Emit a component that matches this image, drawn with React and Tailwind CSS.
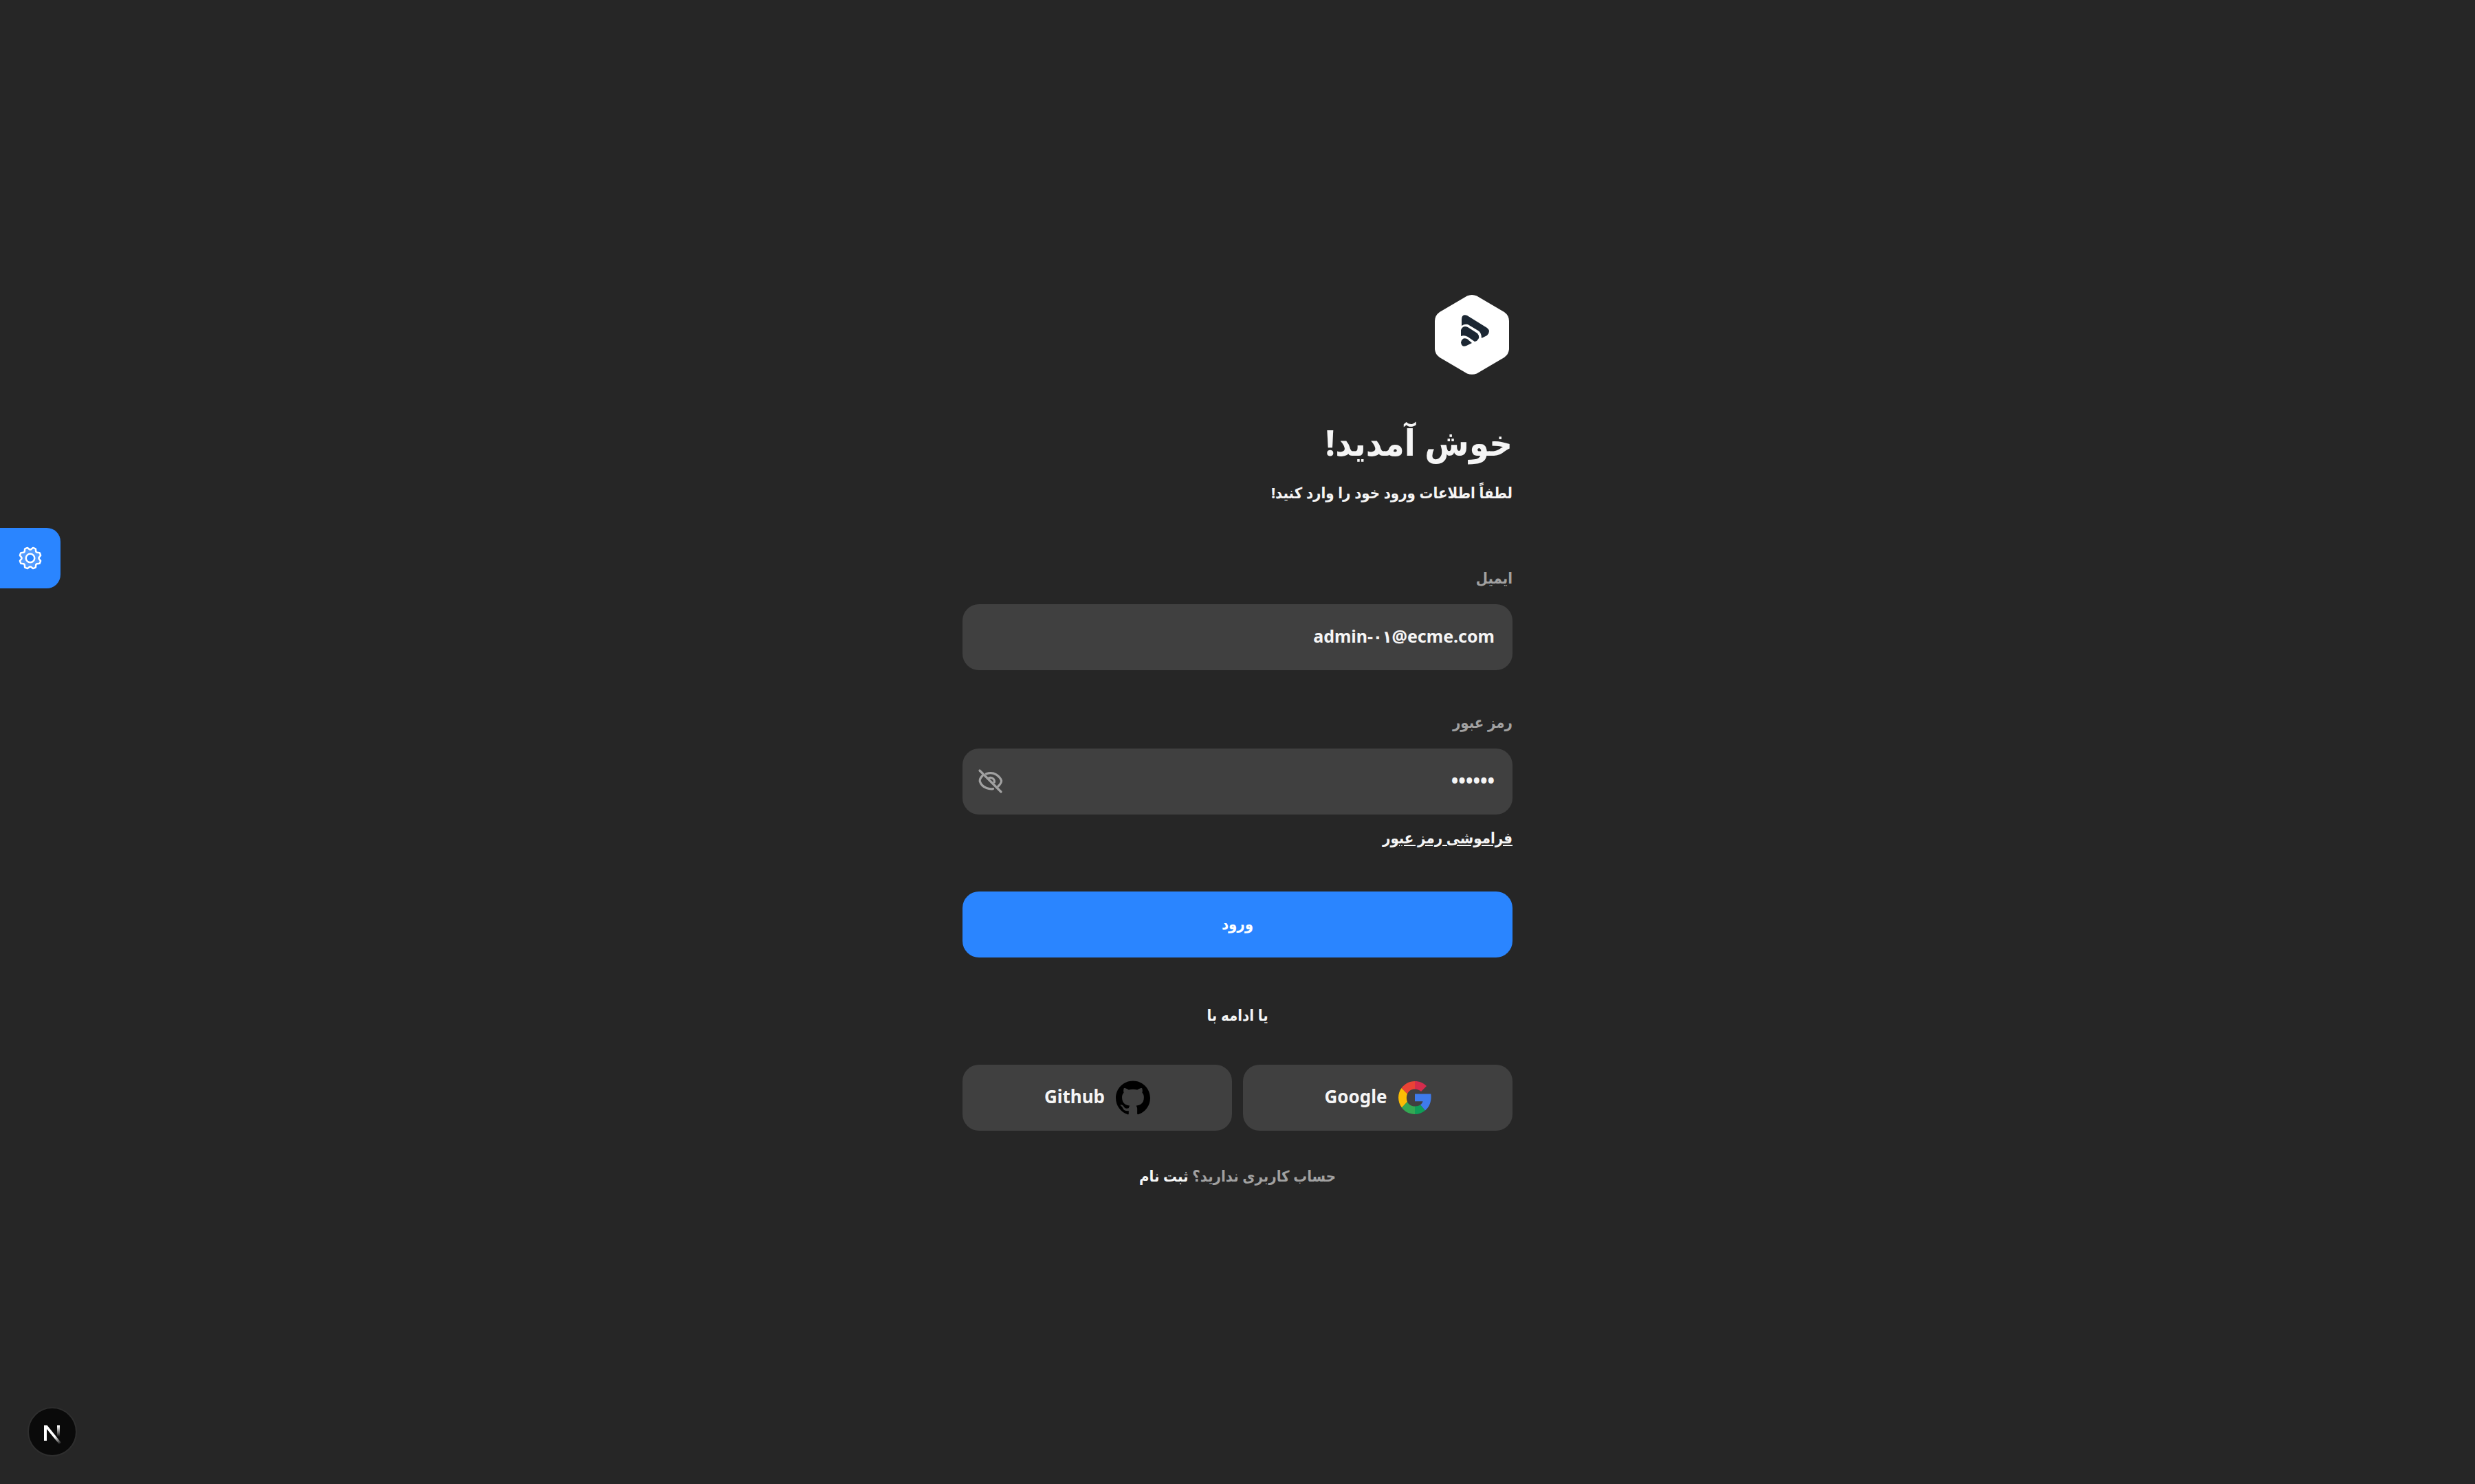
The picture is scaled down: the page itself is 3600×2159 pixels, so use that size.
import { PiGearDuotone } from "react-icons/pi";
import { SiGithub } from "react-icons/si";

function Logo() {
  return (
    <svg viewBox="0 0 110 116" className="mr-1 h-[116px] w-[110px]" role="img" aria-label="Ecme">
      <path d="M48 1.500Q55-1.500 62 1.500L102 25Q109 30 109 38V78Q109 86 102 91L62 114.500Q55 117 48 114.500L8 91Q1 86 1 78V38Q1 30 8 25Z" fill="#fff" />
      <g fill="#1c2733">
        <path d="M40 45V36Q40 27 48 30L77 48Q83 53 77 59L69 63Q69 55 64 52L49 43Q44 42 40 45Z" />
        <path d="M39 60V51Q42 44 49 47L63 56Q68 62 62 67L59 68L49 61Q44 58 39 60Z" />
        <path d="M39 69Q41 61 48 64L55 70L47 74Q40 77 39 69Z" />
      </g>
    </svg>
  );
}

function EyeOff() {
  return (
    <svg viewBox="0 0 46 46" className="size-[46px]" fill="none" stroke="currentColor" strokeWidth="3.200" strokeLinecap="round">
      <path d="M7 7L38 38" />
      <path d="M11.500 14C8 17.500 7 20 7.200 22.500C8.500 27 13 31 17 32.600C20.500 34 23 34.200 26.500 33.600" />
      <path d="M16.500 11.800C21 10.200 26.500 10.200 31 12.800C35 15.500 38 19 38.600 22C38.500 24.800 36.500 27.500 33.800 30" />
      <path d="M20.500 17.800C25 16.500 29 19.500 28.300 24" />
    </svg>
  );
}

function GoogleLogo() {
  return (
    <svg viewBox="0 0 48 48" className="size-12" aria-hidden="true">
      <path fill="#ea4335" d="M24 0v11.500c-5 0-9 2.500-11 7L4.500 10C9 4 15.500 0 24 0Z" />
      <path fill="#d42c4c" d="M24 0c6.500 0 12.500 2.500 17 7l-8 8c-2.500-2.300-5.500-3.500-9-3.500Z" />
      <path fill="#fbbc05" d="M4.500 10l8.500 8.500c-1.500 3.500-1.500 8 0 11.500L5 38.500C-1.500 30-1.500 18 4.500 10Z" />
      <path fill="#34a853" d="M13 30c2 4 6 6.500 11 6.500V48c-8 0-14.500-3.500-19-9.500Z" />
      <path fill="#109d58" d="M24 36.500c3.200 0 6-.8 8-2.200l7 8.200C35 46 30 48 24 48Z" />
      <path fill="#3f7bec" d="M24 18.500h23.300c1.200 9.500-1.300 18-8.300 24l-7-8.200c2-1.300 3-2.800 3.500-5H24Z" />
    </svg>
  );
}

function NextMark() {
  return (
    <svg viewBox="0 0 40 40" className="size-10" fill="none">
      <defs>
        <linearGradient id="stem" x1="0" y1="12" x2="0" y2="27" gradientUnits="userSpaceOnUse">
          <stop stopColor="#fff" />
          <stop offset="1" stopColor="#fff" stopOpacity="0" />
        </linearGradient>
        <linearGradient id="diag" x1="24" y1="27" x2="32" y2="38" gradientUnits="userSpaceOnUse">
          <stop stopColor="#fff" />
          <stop offset="1" stopColor="#fff" stopOpacity="0" />
        </linearGradient>
      </defs>
      <path d="M8 33V10.500h4.500L33 36l-3 2L12 16v17Z" fill="url(#diag)" />
      <path d="M27 10.500h4V28h-4Z" fill="url(#stem)" />
    </svg>
  );
}

const field = "block h-24 w-full rounded-3xl bg-[#404040] px-[26px] pb-1 font-bold text-neutral-100 outline-none";
const social = "flex h-24 flex-1 items-center justify-center gap-4 rounded-3xl bg-[#404040] text-[26px] font-bold text-neutral-100";

export default function App() {
  return (
    <div dir="rtl" className="flex min-h-screen items-center justify-center bg-[#262626] font-['Noto_Sans','DejaVu_Sans_Condensed','DejaVu_Sans',sans-serif] text-[22px] leading-[42px] font-bold text-neutral-100">
      <main className="w-full max-w-[800px]">
        <Logo />
        <h1 className="mt-[62px] text-[52px] leading-[72px]">خوش آمدید!</h1>
        <p className="mt-4">لطفاً اطلاعات ورود خود را وارد کنید!</p>
        <form className="mt-[82px]" onSubmit={(e) => e.preventDefault()}>
          <label htmlFor="email" className="mb-[18px] block text-[#a1a1a1]">ایمیل</label>
          <input id="email" type="text" defaultValue="admin-۰۱@ecme.com" className={`${field} text-[25px]`} />
          <label htmlFor="password" className="mt-[54px] mb-[18px] block text-[#a1a1a1]">رمز عبور</label>
          <div className="relative">
            <input id="password" type="password" defaultValue="123456" className={`${field} text-[28px]`} />
            <button type="button" aria-label="نمایش رمز عبور" className="absolute inset-y-0 left-[18px] flex items-center text-[#a1a1a1]">
              <EyeOff />
            </button>
          </div>
          <a href="#forgot" className="mt-3 block w-fit underline">فراموشی رمز عبور</a>
          <button type="submit" className="mt-[58px] block h-24 w-full rounded-3xl bg-[#2a85ff] pb-1 text-white">ورود</button>
        </form>
        <p className="mt-[62px] text-center">یا ادامه با</p>
        <div className="mt-[52px] flex gap-4">
          <button type="button" className={social}>
            <GoogleLogo />
            <span className="pb-1">Google</span>
          </button>
          <button type="button" className={social}>
            <SiGithub className="size-[50px] text-black" />
            <span className="pb-1">Github</span>
          </button>
        </div>
        <p className="mt-11 text-center text-[#a1a1a1]">
          حساب کاربری ندارید؟ <a href="#signup" className="text-neutral-100">ثبت نام</a>
        </p>
      </main>
      <button type="button" aria-label="تنظیمات" className="fixed top-[768px] left-0 flex size-[88px] items-center justify-center rounded-r-[20px] bg-[#2a85ff] text-white">
        <PiGearDuotone className="size-10" />
      </button>
      <button type="button" aria-label="Next.js" className="fixed bottom-10 left-10 flex size-[72px] items-center justify-center rounded-full border-2 border-[#2e2e2e] bg-[#0a0a0a]">
        <NextMark />
      </button>
    </div>
  );
}
